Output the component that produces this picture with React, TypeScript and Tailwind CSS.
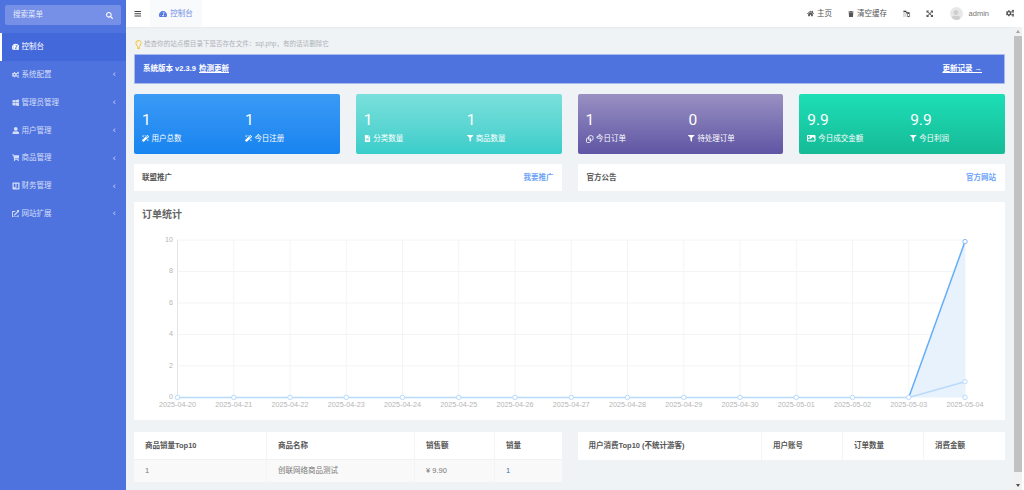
import type { ReactNode } from 'react';
import {
  FaBars,
  FaChevronLeft,
  FaCogs,
  FaExpandArrowsAlt,
  FaExternalLinkAlt,
  FaFileAlt,
  FaFilter,
  FaHome,
  FaImage,
  FaMagic,
  FaRegLightbulb,
  FaSearch,
  FaShoppingCart,
  FaTachometerAlt,
  FaTrash,
  FaUser,
  FaWindows,
} from 'react-icons/fa';

const font = "font-['Liberation_Sans','Noto_Sans_CJK_SC',sans-serif]";

function LedgerIcon() {
  return (
    <svg viewBox="0 0 16 16" className="h-[8px] w-[8px]">
      <rect x="1" y="1" width="14" height="14" rx="1.5" fill="currentColor" />
      <path d="M3.5 3.5h3.5v7H3.5zM9 3.5h3.5v9H7.5v-1H9z" fill="#4e73df" />
    </svg>
  );
}

function OrderIcon() {
  return (
    <svg viewBox="0 0 16 16" className="h-[8px] w-[8px]" fill="none" stroke="currentColor" strokeWidth="1.6">
      <circle cx="9.5" cy="6" r="5" />
      <rect x="1" y="6" width="8" height="9" rx="2" />
    </svg>
  );
}

function LangIcon() {
  return (
    <svg viewBox="0 0 16 16" className="h-[8px] w-[8px]">
      <rect x="0" y="1" width="9" height="13" rx="1" fill="#dcdcdc" />
      <path d="M2 1h5l2 3h6v11H8L6 12V5z" fill="#e9e9e9" />
      <path d="M1 1.5h5l1.5 3H13V14H9V7H7L5.5 4H1z" fill="#444" />
      <path d="M10 8h2v4h-2z" fill="#fff" />
    </svg>
  );
}

const menu: { label: string; icon: ReactNode; active?: boolean }[] = [
  { label: '控制台', icon: <FaTachometerAlt />, active: true },
  { label: '系统配置', icon: <FaCogs /> },
  { label: '管理员管理', icon: <FaWindows /> },
  { label: '用户管理', icon: <FaUser /> },
  { label: '商品管理', icon: <FaShoppingCart /> },
  { label: '财务管理', icon: <LedgerIcon /> },
  { label: '网站扩展', icon: <FaExternalLinkAlt /> },
];

const cards = [
  {
    bg: 'bg-gradient-to-b from-[#3a9af5] to-[#1684f0]',
    items: [
      { value: '1', label: '用户总数', icon: <FaMagic className="text-[7px]" /> },
      { value: '1', label: '今日注册', icon: <FaMagic className="text-[7px]" /> },
    ],
  },
  {
    bg: 'bg-gradient-to-b from-[#7ae0dc] to-[#38cdca]',
    items: [
      { value: '1', label: '分类数量', icon: <FaFileAlt className="text-[7px]" /> },
      { value: '1', label: '商品数量', icon: <FaFilter className="text-[6.5px]" /> },
    ],
  },
  {
    bg: 'bg-gradient-to-b from-[#9a90c2] to-[#5f55a4]',
    items: [
      { value: '1', label: '今日订单', icon: <OrderIcon /> },
      { value: '0', label: '待处理订单', icon: <FaFilter className="text-[6.5px]" /> },
    ],
  },
  {
    bg: 'bg-gradient-to-b from-[#1ddfb6] to-[#16ba97]',
    items: [
      { value: '9.9', label: '今日成交金额', icon: <FaImage className="text-[8.5px]" /> },
      { value: '9.9', label: '今日利润', icon: <FaFilter className="text-[6.5px]" /> },
    ],
  },
];

const dates = [
  '2025-04-20', '2025-04-21', '2025-04-22', '2025-04-23', '2025-04-24',
  '2025-04-25', '2025-04-26', '2025-04-27', '2025-04-28', '2025-04-29',
  '2025-04-30', '2025-05-01', '2025-05-02', '2025-05-03', '2025-05-04',
];

function Chart() {
  // panel origin is 134,202 in the page
  const left = 43.5;
  const top = 38;
  const bottom = 195.4;
  const step = 56.25;
  const xs = dates.map((_, i) => left + i * step);
  const yAt = (v: number) => bottom - (v / 10) * (bottom - top);
  const last = xs[14];
  return (
    <svg width="870" height="218" viewBox="0 0 870 218" className="absolute left-0 top-0 block">
      {[0, 2, 4, 6, 8, 10].map((v) => (
        <g key={v}>
          {v > 0 && <line x1={left} x2={last} y1={yAt(v)} y2={yAt(v)} stroke="#f3f4f6" strokeWidth="1" />}
          <text x={left - 4.5} y={yAt(v) + 2} textAnchor="end" fontSize="7.2" fill="#b5b5b5" fontFamily="Liberation Sans">
            {v}
          </text>
        </g>
      ))}
      {xs.map((x, i) => (
        <g key={x}>
          {i > 0 && <line x1={x} x2={x} y1={top} y2={bottom} stroke="#f3f4f6" strokeWidth="1" />}
          <text x={x} y={bottom + 9.8} textAnchor="middle" fontSize="7.2" fill="#b5b5b5" fontFamily="Liberation Sans">
            {dates[i]}
          </text>
        </g>
      ))}
      <line x1={left} x2={left} y1={top} y2={bottom} stroke="#e2e4e8" strokeWidth="1" />
      <polygon points={`${xs[13]},${bottom} ${last},${yAt(9.9)} ${last},${bottom}`} fill="#e8f2fd" />
      <polyline
        points={`${left},${bottom} ${xs[13]},${bottom} ${last},${yAt(1)}`}
        fill="none"
        stroke="#b8dafb"
        strokeWidth="1.5"
      />
      <polyline points={`${xs[13]},${bottom} ${last},${yAt(9.9)}`} fill="none" stroke="#64aef7" strokeWidth="1.5" />
      {xs.map((x) => (
        <circle key={x} cx={x} cy={bottom} r="2.2" fill="#fff" stroke="#b8dafb" strokeWidth="1" />
      ))}
      <circle cx={last} cy={yAt(1)} r="2.2" fill="#fff" stroke="#b8dafb" strokeWidth="1" />
      <circle cx={last} cy={yAt(9.9)} r="2.2" fill="#fff" stroke="#84bdf8" strokeWidth="1" />
    </svg>
  );
}

export default function App() {
  return (
    <div className={`${font} flex h-[490px] w-[1024px] overflow-hidden bg-[#f0f3f6] text-[7.5px]`}>
      <aside className="w-[126px] shrink-0 bg-[#4e73df] text-[#d5def8]">
        <div className="px-[5px] pt-[5px]">
          <div className="flex h-[20px] items-center justify-between rounded-[2px] bg-[#7590e6] pl-2 pr-[8px] text-[#e6ebfb]">
            <span>搜索菜单</span>
            <FaSearch className="text-[7px] text-white" />
          </div>
        </div>
        <nav className="mt-[8px] flex flex-col">
          {menu.map((m) => (
            <div
              key={m.label}
              className={`flex h-[27.8px] items-center pr-[10px] ${m.active ? 'border-l-2 border-white bg-[#4368da] pl-[8px] text-white' : 'pl-[10px]'}`}
            >
              <span className="flex w-[11px] justify-center text-[7.5px]">{m.icon}</span>
              <span className="ml-[0.5px] flex-1">{m.label}</span>
              {!m.active && <FaChevronLeft className="text-[4.5px] opacity-80" />}
            </div>
          ))}
        </nav>
      </aside>

      <div className="flex min-w-0 flex-1 flex-col">
        <header className="flex h-[27px] shrink-0 items-center bg-white text-[#555] shadow-[0_1px_2px_rgba(0,0,0,0.04)]">
          <FaBars className="ml-[8px] text-[7.5px] text-[#444]" />
          <div className="ml-[8.5px] flex h-full w-[52px] items-center justify-center gap-[3px] bg-[#f9fafb] text-[#6f8de6]">
            <FaTachometerAlt className="text-[8px] text-[#4e73df]" />
            <span>控制台</span>
          </div>
          <div className="ml-auto flex items-center pr-[10px]">
            <span className="flex items-center gap-[3px]">
              <FaHome className="text-[7px]" />
              主页
            </span>
            <span className="ml-[16px] flex items-center gap-[3px]">
              <FaTrash className="text-[6px]" />
              清空缓存
            </span>
            <span className="ml-[15.5px]">
              <LangIcon />
            </span>
            <FaExpandArrowsAlt className="ml-[15px] text-[7.5px]" />
            <span className="ml-[16.5px] flex h-[13.5px] w-[13.5px] items-end justify-center overflow-hidden rounded-full bg-[#e8e8e8]">
              <FaUser className="text-[10px] text-[#cfcfcf]" />
            </span>
            <span className="ml-[5.5px] text-[#777]">admin</span>
            <FaCogs className="ml-[16.5px] text-[8.5px]" />
          </div>
        </header>

        <div className="flex min-h-0 flex-1">
          <main className="min-w-0 flex-1 pl-[8px] pr-[9px] pt-[11px]">
            <p className="flex h-[12px] items-center gap-[1px] text-[6.55px] text-[#adb1b7]">
              <FaRegLightbulb className="text-[9px] text-[#f2c230]" />
              检查你的站点根目录下是否存在文件：sql.php，有的话请删除它
            </p>
            <div className="mt-[4px] flex h-[30px] items-center justify-between rounded-[1px] border border-[#a9b9ec] bg-[#4e73df] pl-[8px] pr-[22px] font-bold text-white">
              <span>
                系统版本 v2.3.9 <span className="ml-[1px] underline">检测更新</span>
              </span>
              <span className="underline">更新记录 →</span>
            </div>

            <div className="mt-[10px] grid grid-cols-4 gap-x-[16px]">
              {cards.map((c, i) => (
                <div key={i} className={`${c.bg} grid h-[59.5px] grid-cols-2 rounded-[2px] pt-[17px] text-white`}>
                  {c.items.map((it) => (
                    <div key={it.label} className="pl-[8px]">
                      <div className="font-['Roboto'] text-[15.5px] leading-[18px]">{it.value}</div>
                      <div className="mt-[4.5px] flex items-center gap-[2.5px] leading-[10px]">
                        {it.icon}
                        {it.label}
                      </div>
                    </div>
                  ))}
                </div>
              ))}
            </div>

            <div className="mt-[10px] grid grid-cols-2 gap-x-[16px]">
              <div className="flex h-[27.5px] items-center justify-between bg-white px-[8px] font-bold text-[#555]">
                <span>联盟推广</span>
                <span className="text-[#6ea3f7]">我要推广</span>
              </div>
              <div className="flex h-[27.5px] items-center justify-between bg-white px-[9px] font-bold text-[#555]">
                <span>官方公告</span>
                <span className="text-[#6ea3f7]">官方网站</span>
              </div>
            </div>

            <section className="relative mt-[11px] h-[218px] bg-white">
              <h2 className="px-[8px] pt-[6px] text-[10px] font-bold leading-[14px] text-[#666]">订单统计</h2>
              <Chart />
            </section>

            <div className="mt-[12px] grid grid-cols-2 items-start gap-x-[16px] text-[#555]">
              <table className="w-full table-fixed border-collapse bg-white">
                <thead>
                  <tr className="h-[27.5px] font-bold">
                    <th className="w-[132.5px] border-r border-[#f3f4f6] pl-[11px] text-left">商品销量Top10</th>
                    <th className="w-[148px] border-r border-[#f3f4f6] pl-[11px] text-left">商品名称</th>
                    <th className="w-[80px] border-r border-[#f3f4f6] pl-[11px] text-left">销售额</th>
                    <th className="pl-[11px] text-left">销量</th>
                  </tr>
                </thead>
                <tbody>
                  <tr className="h-[22.5px] border-t border-[#f0f1f3] bg-[#f9f9f9] text-[#777]">
                    <td className="border-r border-[#f3f4f6] pl-[11px]">1</td>
                    <td className="border-r border-[#f3f4f6] pl-[11px]">创联网络商品测试</td>
                    <td className="border-r border-[#f3f4f6] pl-[11px]">¥ 9.90</td>
                    <td className="pl-[11px] text-[#3b6fb5]">1</td>
                  </tr>
                </tbody>
              </table>
              <table className="w-full table-fixed border-collapse bg-white">
                <thead>
                  <tr className="h-[27.5px] font-bold">
                    <th className="w-[184px] border-r border-[#f3f4f6] pl-[11px] text-left">用户消费Top10 (不统计游客)</th>
                    <th className="w-[81px] border-r border-[#f3f4f6] pl-[11px] text-left">用户账号</th>
                    <th className="w-[81px] border-r border-[#f3f4f6] pl-[11px] text-left">订单数量</th>
                    <th className="pl-[11px] text-left">消费金额</th>
                  </tr>
                </thead>
              </table>
            </div>
          </main>

          <div className="flex w-[10px] shrink-0 flex-col border-r-2 border-white bg-[#f1f1f1]">
            <div className="flex h-[9px] items-center justify-center">
              <span className="h-0 w-0 border-x-[2px] border-b-[3px] border-x-transparent border-b-[#a3a3a3]" />
            </div>
            <div className="flex-1 bg-[#c1c1c1]" />
            <div className="flex h-[18px] items-center justify-center pt-[8px]">
              <span className="h-0 w-0 border-x-[2px] border-t-[3px] border-x-transparent border-t-[#505050]" />
            </div>
          </div>
        </div>
      </div>
    </div>
  );
}
